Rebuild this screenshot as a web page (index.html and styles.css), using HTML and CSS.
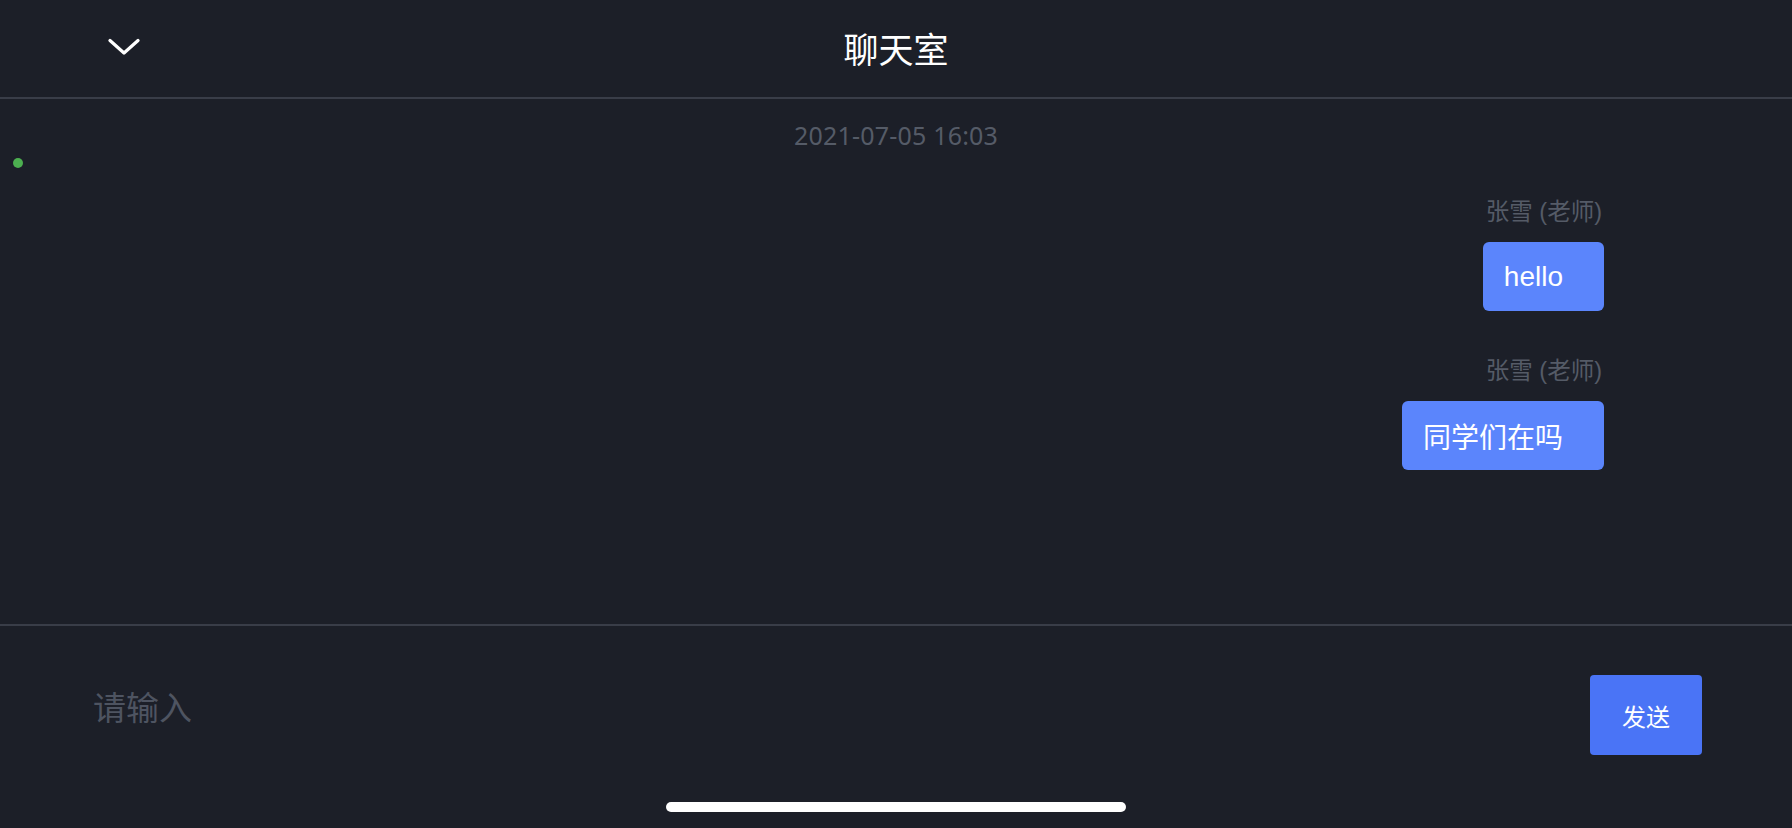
FILE: index.html
```html
<!DOCTYPE html>
<html lang="zh">
<head>
<meta charset="utf-8">
<title>聊天室</title>
<link rel="stylesheet" href="styles.css">
</head>
<body>
<div class="app">
  <header class="topbar">
    <button class="back" aria-label="收起">
      <svg width="32" height="18" viewBox="0 0 32 18"><path d="M2 2.5 L16 15 L30 2.5" fill="none" stroke="#ffffff" stroke-width="3.2" stroke-linecap="round" stroke-linejoin="round"/></svg>
    </button>
    <h1 class="title">聊天室</h1>
    <span class="spacer"></span>
  </header>
  <main class="messages">
    <div class="time">2021-07-05 16:03</div>
    <div class="status"><span class="dot"></span></div>
    <div class="msg">
      <div class="name">张雪 (老师)</div>
      <div class="bubble">hello</div>
    </div>
    <div class="msg">
      <div class="name">张雪 (老师)</div>
      <div class="bubble">同学们在吗</div>
    </div>
  </main>
  <footer class="composer">
    <div class="input">请输入</div>
    <button class="send">发送</button>
  </footer>
  <div class="home"><span class="bar"></span></div>
</div>
</body>
</html>
```
FILE: styles.css
```css
* { box-sizing: border-box; }
html, body { margin: 0; padding: 0; }
body {
  background: #1c1f28;
  font-family: "Noto Sans", "Noto Sans CJK SC", sans-serif;
  color: #ffffff;
}
.app {
  width: 1792px;
  height: 828px;
  display: flex;
  flex-direction: column;
  overflow: hidden;
}
.topbar {
  height: 99px;
  flex: none;
  display: grid;
  grid-template-columns: 200px 1fr 200px;
  align-items: center;
  border-bottom: 2px solid #393d48;
  padding-bottom: 2px;
}
.back {
  justify-self: start;
  margin-left: 108px;
  margin-top: -2px;
  background: none;
  border: 0;
  padding: 0;
  display: flex;
  cursor: pointer;
}
.title {
  margin: 0;
  text-align: center;
  font-family: "Noto Sans CJK SC", sans-serif;
  font-weight: 400;
  font-size: 35px;
  line-height: 40px;
  color: #ffffff;
}
.messages {
  flex: 1;
  display: flex;
  flex-direction: column;
  border-bottom: 2px solid #393d48;
  padding-top: 20px;
}
.time {
  text-align: center;
  font-size: 25px;
  line-height: 32px;
  color: #555b67;
  letter-spacing: 0.2px;
}
.status {
  height: 10px;
  margin-top: 7px;
  padding-left: 13px;
  display: flex;
}
.dot {
  width: 10px;
  height: 10px;
  border-radius: 50%;
  background: #4caf50;
}
.msg {
  display: flex;
  flex-direction: column;
  align-items: flex-end;
  padding-right: 188px;
  margin-top: 29px;
}
.msg + .msg { margin-top: 45px; }
.name {
  font-family: "Liberation Sans", "Noto Sans CJK SC", sans-serif;
  font-size: 23.5px;
  line-height: 30px;
  color: #555b67;
  margin-right: 2px;
}
.bubble {
  margin-top: 15px;
  height: 69px;
  display: flex;
  align-items: center;
  padding: 0 41px 0 21px;
  background: #5b85fc;
  border-radius: 6px;
  font-family: "Liberation Sans", "Noto Sans CJK SC", sans-serif;
  font-size: 28px;
  color: #ffffff;
}
.composer {
  height: 176px;
  flex: none;
  display: flex;
  align-items: flex-start;
  justify-content: space-between;
  padding: 49px 90px 0 93px;
}
.input {
  margin-top: 9px;
  font-family: "Noto Sans CJK SC", sans-serif;
  font-size: 33px;
  line-height: 44px;
  color: #4e5461;
}
.send {
  width: 112px;
  height: 80px;
  border: 0;
  border-radius: 4px;
  background: #4a74f6;
  color: #ffffff;
  font-family: "Noto Sans CJK SC", sans-serif;
  font-size: 24px;
  cursor: pointer;
}
.home {
  height: 26px;
  flex: none;
  display: flex;
  justify-content: center;
}
.bar {
  width: 460px;
  height: 10px;
  border-radius: 5px;
  background: #ffffff;
}
```
